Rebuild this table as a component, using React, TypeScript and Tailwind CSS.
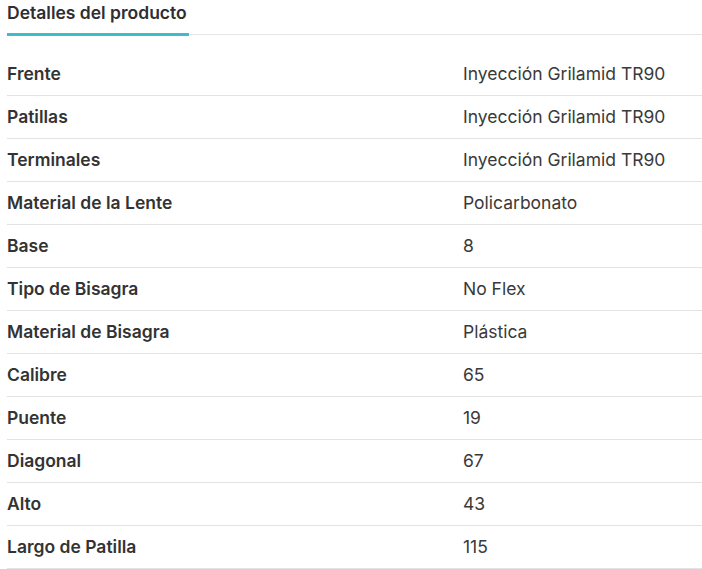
import React from 'react';

const rows: [string, string][] = [
  ['Frente', 'Inyección Grilamid TR90'],
  ['Patillas', 'Inyección Grilamid TR90'],
  ['Terminales', 'Inyección Grilamid TR90'],
  ['Material de la Lente', 'Policarbonato'],
  ['Base', '8'],
  ['Tipo de Bisagra', 'No Flex'],
  ['Material de Bisagra', 'Plástica'],
  ['Calibre', '65'],
  ['Puente', '19'],
  ['Diagonal', '67'],
  ['Alto', '43'],
  ['Largo de Patilla', '115'],
];

const App = () => {
  return (
    <div className="w-[702px] h-[569px] bg-white pl-[7px] text-[#333333] font-['Inter',sans-serif] overflow-hidden">
      {/* Tabs */}
      <div className="flex items-end border-b border-[#e5e5e5] mb-[18px]">
        <div className="pt-[1px] pb-[8px] border-b-[3px] border-[#3dbdc8] -mb-[2px] w-[182px]">
          <h2 className="text-[17.5px] leading-6 font-semibold text-[#2e2e33]">Detalles del producto</h2>
        </div>
      </div>

      {/* Product details */}
      <div>
        {rows.map(([label, value]) => (
          <div key={label} className="grid grid-cols-[456px_1fr] border-b border-[#e3e3e3] py-[9px]">
            <span className="text-[17.5px] leading-6 font-semibold text-[#333333]">{label}</span>
            <span className="text-[17.5px] leading-6 text-[#3a3a3a]">{value}</span>
          </div>
        ))}
      </div>
    </div>
  );
};

export default App;
